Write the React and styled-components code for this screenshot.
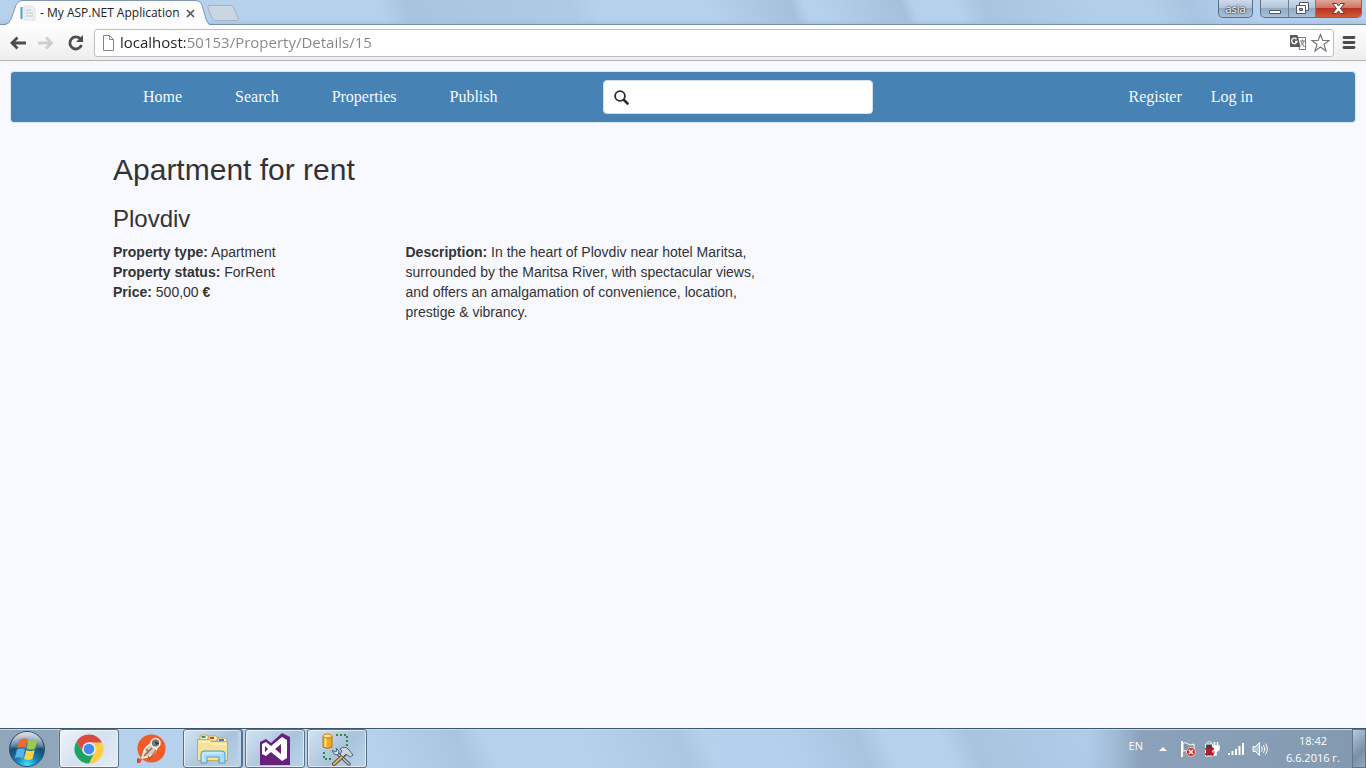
import React from "react";
import styled, { createGlobalStyle } from "styled-components";

const GlobalStyle = createGlobalStyle`
  *, *::before, *::after { box-sizing: border-box; }
  body {
    margin: 0;
    background: #f8f8ff;
    color: #333;
    font: 14px/20px "Liberation Sans", Arial, sans-serif;
  }
  button { padding: 0; border: 0; background: none; font: inherit; color: inherit; }
  svg { display: block; }
`;

const uiFont = `"Open Sans", "Noto Sans", sans-serif`;

const Screen = styled.div`
  display: flex;
  flex-direction: column;
  min-height: 100vh;
`;

/* ---------- browser window ---------- */

const TitleBar = styled.header`
  display: flex;
  align-items: flex-start;
  height: 25px;
  padding: 0 4px 0 5px;
  border-bottom: 1px solid #7e8da6;
  background:
    linear-gradient(180deg, transparent 80%, rgba(150, 190, 230, 0.5)),
    linear-gradient(68deg, #b5d1ec 28%, #a8c4de 30%, #aecae5 42%, #b5d1ec 44%,
      #b5d1ec 52%, #a5c0db 58%, #b5d1ec 59%, #b5d1ec 60%, #a5c0db 66%, #b5d1ec 67%,
      #b5d1ec 70%, #a8c4df 72%, #b2cfea 80%, #b2cfea 84%, #a8c4e0 87%, #b5d1ec 92%);
`;

const Tab = styled.div`
  position: relative;
  display: flex;
  align-items: center;
  width: 205px;
  height: 25px;
  padding: 1px 14px 0 15px;
  color: #222;
  font: 12px/16px ${uiFont};
  white-space: nowrap;
`;

const TabShape = styled.svg`
  position: absolute;
  inset: 0;
`;

const TabTitle = styled.span`
  position: relative;
  flex: 1;
  margin-left: 4px;
`;

const TabIcon = styled.svg`
  position: relative;
  flex: none;
`;

const TabClose = styled.button`
  position: relative;
  width: 9px;
  height: 9px;
  margin-right: 1px;
`;

const NewTab = styled.button`
  margin: 5px auto 0 -3px;
`;

const glass = `
  border: 1px solid #5b6f88;
  border-top: 0;
  background: linear-gradient(#cddbe9, #b3c6da 45%, #93abc5 50%, #a8c0da);
`;

const UserButton = styled.button`
  ${glass}
  width: 35px;
  height: 18px;
  margin-right: 7px;
  border-radius: 0 0 5px 5px;
  color: #fff;
  font: 11px/16px ${uiFont};
  text-shadow: 0 0 2px #223, 0 0 2px #223;
`;

const WindowControls = styled.div`
  ${glass}
  display: flex;
  height: 18px;
  border-radius: 0 0 5px 5px;
  overflow: hidden;
`;

const WindowButton = styled.button`
  display: grid;
  place-items: center;
  width: ${(p) => (p.$close ? 46 : 27)}px;
  height: 17px;
  border-left: ${(p) => (p.$divided ? "1px solid #6b7f98" : "0")};
  background: ${(p) => (p.$close ? "linear-gradient(#e0a698, #cf7465 45%, #b8321c 50%, #cd5c3c)" : "none")};
`;

const Toolbar = styled.div`
  display: flex;
  align-items: center;
  height: 36px;
  padding: 0 6px 0 8px;
  border-bottom: 1px solid #b3b3b6;
  background: linear-gradient(#fefefe, #eeeeef);
`;

const ToolButton = styled.button`
  flex: none;
  width: 20px;
  height: 20px;
  margin-right: ${(p) => p.$gap || 0}px;
`;

const AddressBar = styled.div`
  display: flex;
  flex: 1;
  align-items: center;
  height: 28px;
  margin-right: 6px;
  padding: 0 3px 0 7px;
  border: 1px solid #bdbdc1;
  border-radius: 3px;
  background: #fff;
`;

const AddressInput = styled.input`
  flex: 1;
  min-width: 0;
  height: 26px;
  margin-left: 5px;
  padding: 0 0 2px;
  border: 0;
  outline: 0;
  background: linear-gradient(90deg, #222 65px, #858585 65px);
  background-clip: text;
  -webkit-text-fill-color: transparent;
  font: 15px/24px ${uiFont};
`;

/* ---------- web page ---------- */

const Page = styled.main`
  flex: 1;
  padding: 10px 10px 0;
`;

const Navbar = styled.nav`
  border: 1px solid #dbe6f3;
  border-radius: 4px;
  background: steelblue;
`;

const Container = styled.div`
  width: 100%;
  max-width: 1170px;
  margin: 0 auto;
  padding: 0 15px;
`;

const NavRow = styled(Container)`
  display: flex;
  align-items: center;
  height: 50px;
`;

const NavLinks = styled.div`
  display: flex;
  gap: ${(p) => p.$gap}px;
  margin-left: ${(p) => (p.$end ? "auto" : "30px")};
  font: 16px/20px "Liberation Serif", "Times New Roman", serif;
`;

const NavLink = styled.a`
  color: #f8f8ff;
  text-decoration: none;
`;

const SearchBox = styled.label`
  display: flex;
  align-items: center;
  width: 270px;
  height: 34px;
  margin-left: 105px;
  padding: 0 10px;
  border: 1px solid #d5dfea;
  border-radius: 4px;
  background: #fff;
`;

const SearchInput = styled.input`
  flex: 1;
  min-width: 0;
  margin-left: 8px;
  border: 0;
  outline: 0;
  font: inherit;
`;

const Title = styled.h2`
  margin: 30px 0 10px;
  font-size: 30px;
  font-weight: 400;
  line-height: 33px;
`;

const City = styled.h3`
  margin: 20px 0 10px;
  font-size: 24px;
  font-weight: 400;
  line-height: 26px;
`;

const Columns = styled.div`
  display: grid;
  grid-template-columns: 3fr 4fr 5fr;
  margin: 0 -15px;
`;

const Column = styled.div`
  padding: 0 15px;
`;

const Line = styled.p`
  margin: 0;
`;

/* ---------- taskbar ---------- */

const Taskbar = styled.footer`
  display: flex;
  align-items: stretch;
  height: 40px;
  border-top: 1px solid #3c566b;
  box-shadow: inset 0 1px 0 #c9d9e6;
  background:
    linear-gradient(90deg, #92a6bb 58px, transparent 60px),
    linear-gradient(270deg, #8399b0, #8ca2ba 225px, rgba(150, 174, 200, 0.6) 250px, transparent 280px),
    linear-gradient(66deg, #b5d1ec 28%, #a9c5e0 34%, #b5d1ec 36%, #b5d1ec 43%, #abc8e3 50%,
      #b5d1ec 52%, #b2cfec 58%, #a8c4df 63%, #b5d1ec 65%, #b5d1ec 69%, #a8c4df 71%, #afcce9 80%);
`;

const StartButton = styled.button`
  width: 54px;
  padding-left: 8px;
  margin-right: 5px;
`;

const TaskButton = styled.button`
  display: grid;
  place-items: center;
  width: 60px;
  margin-right: ${(p) => p.$gap || 0}px;
  border: 1px solid ${(p) => (p.$state ? "#587087" : "transparent")};
  border-radius: 3px;
  box-shadow: ${(p) => (p.$state ? "inset 0 0 0 1px rgba(255,255,255,.6)" : "none")};
  background: ${(p) =>
    p.$state === "active"
      ? "linear-gradient(135deg, #eef4fa, #d4e1ee 50%, #e3edf6)"
      : p.$state === "open"
      ? "linear-gradient(135deg, #d3e3f2, #a9c4de 55%, #bcd4ea)"
      : "none"};
`;

const StackEdge = styled.span`
  width: 4px;
  margin: 0 3px 0 -5px;
  border: 1px solid #587087;
  border-left: 0;
  border-radius: 0 3px 3px 0;
  background: #bdd3e8;
`;

const Tray = styled.div`
  display: flex;
  align-items: center;
  margin-left: auto;
  color: #fff;
  font: 12px/17px ${uiFont};
`;

const Language = styled.span`
  margin: -6px 16px 0 0;
  font-size: 11px;
`;

const TrayIcon = styled.button`
  margin-right: ${(p) => p.$gap}px;
`;

const Clock = styled.time`
  width: 60px;
  margin-right: 9px;
  font-size: 11px;
  text-align: center;
  white-space: nowrap;
`;

const ShowDesktop = styled.button`
  align-self: stretch;
  width: 14px;
  border: 1px solid #60758b;
  background: linear-gradient(135deg, #b9c9d9, #7890a9 60%, #91a7bd);
`;

/* ---------- drawings ---------- */

const Arrow = ({ color, flip }) => (
  <svg width="20" height="20" viewBox="0 0 20 20" fill="none" stroke={color} strokeWidth="2.8">
    <path d={flip ? "M2 10h13M10 4.500l5.500 5.500-5.500 5.500" : "M18 10H4M9.500 4.500L4 10l5.500 5.500"} />
  </svg>
);

const StartOrb = () => (
  <svg width="38" height="38" viewBox="0 0 38 38">
    <defs>
      <radialGradient id="orb" cx="50%" cy="95%" r="85%">
        <stop offset="0" stopColor="#45e4ff" />
        <stop offset=".35" stopColor="#1685b4" />
        <stop offset=".7" stopColor="#164b76" />
        <stop offset="1" stopColor="#7793ab" />
      </radialGradient>
      <linearGradient id="shine" x1="0" y1="0" x2="0" y2="1">
        <stop offset="0" stopColor="#fff" stopOpacity=".7" />
        <stop offset="1" stopColor="#fff" stopOpacity=".1" />
      </linearGradient>
    </defs>
    <circle cx="19" cy="19" r="17.500" fill="url(#orb)" stroke="#31506b" />
    <path d="M3 17a16 15 0 0 1 32 0q-16 5-32 0z" fill="url(#shine)" />
    <path d="M11.500 10q4-3 8-1l-2.200 9q-4-2-8 0z" fill="#ee6b2f" />
    <path d="M20.800 9.500q4 2.500 8.500 0l-2.200 9q-4 2.500-8.500 0z" fill="#9ccb4c" />
    <path d="M9 19.500q4-2 8 0l-2.200 9q-4-2.500-8 0z" fill="#55b4ec" />
    <path d="M18.200 20q4 2 8.500 0l-2.200 9q-4 2-8.500 0z" fill="#fcd145" />
  </svg>
);

const Chrome = () => (
  <svg width="30" height="30" viewBox="0 0 30 30">
    <path d="M27.560 7.750A14.500 14.500 0 0 1 15 29.500L20.600 18.250 15 8.500h13z" fill="#ffcd42" />
    <path d="M2.440 7.750A14.500 14.500 0 0 0 15 29.500l5.600-11.250L15 21.500l-5.600-3.250z" fill="#1da362" />
    <path d="M2.440 7.750L9.400 18.250 15 8.500h13A14.500 14.500 0 0 0 2.440 7.750z" fill="#dd4b3e" />
    <circle cx="15" cy="15" r="6.800" fill="#f1f1f1" />
    <circle cx="15" cy="15" r="5.300" fill="#4688f1" />
  </svg>
);

const Postman = () => (
  <svg width="30" height="30" viewBox="0 0 30 30">
    <path d="M1 24l5 1-2 4H1z" fill="#e34d20" />
    <circle cx="15.500" cy="14.500" r="14" fill="#f15a29" />
    <path d="M16 9q-7 4-8.500 10L6 24l5-1q7-1 10-9z" fill="#d9c9b8" stroke="#fff3e8" strokeWidth="1.600" strokeLinejoin="round" />
    <path d="M8 22l8-8M12 22l1.500 3L20 16M10 15l3 3" fill="none" stroke="#8a6450" strokeWidth="1.200" />
    <circle cx="19.500" cy="9" r="4.500" fill="#727b80" stroke="#fff3e8" strokeWidth="1.600" />
    <path d="M19 7l4 2.500-3 1.500z" fill="#2c3338" />
  </svg>
);

const Explorer = () => (
  <svg width="34" height="32" viewBox="0 0 34 32">
    <path d="M4 7V3q0-1 1-1h6l2 2v3zM12 8V4q0-1 1-1h7l2 2v3zM21 9V6q0-1 1-1h7l2 2v3z" fill="#fbf6dc" stroke="#c2a255" />
    <path d="M5.500 4h4" stroke="#2da052" strokeWidth="2" />
    <path d="M14 5h4" stroke="#cf4234" strokeWidth="2" />
    <path d="M23 7h5" stroke="#3b84cb" strokeWidth="2" />
    <path d="M1.500 6.500h12l2 2h16v19h-30z" fill="#f6e39b" stroke="#c9a954" />
    <path d="M3 9h10l2 2h15" stroke="#fff8d2" fill="none" />
    <path d="M5 30v-9q0-3 3-3h18q3 0 3 3v9h-6v-6H11v6z" fill="#a9dcf5" stroke="#509dc5" />
    <path d="M7 28v-7q0-1 2-1h17" fill="none" stroke="#e9f8ff" />
  </svg>
);

const VisualStudio = () => (
  <svg width="30" height="32" viewBox="0 0 30 32">
    <path d="M0 9l6-3 5 4L22 0l8 4v28H0z" fill="#68217a" />
    <path fillRule="evenodd" fill="#fff" d="M22 4l5 3v18l-5 3-11-9-5 4-4-2V11l4-2 5 4zM21 11l-6 5 6 5zM5 13v6l3-3z" />
  </svg>
);

const DataTools = () => (
  <svg width="34" height="34" viewBox="0 0 34 34">
    <path d="M16 3h11v11M4 20v7h8" fill="none" stroke="#299027" strokeWidth="2" strokeDasharray="2 2" />
    <path d="M3 4v11q4.500 3 9 0V4z" fill="#f1a622" stroke="#ad7410" />
    <path d="M5.500 6v9" stroke="#ffe29a" strokeWidth="2" />
    <ellipse cx="7.500" cy="4" rx="4.500" ry="2" fill="#ffe17d" stroke="#bd8416" />
    <path d="M17 21l12 11" stroke="#4b5661" strokeWidth="3.500" strokeLinecap="round" />
    <path d="M17 21l12 11" stroke="#c3ccd5" strokeWidth="1.500" strokeLinecap="round" />
    <path d="M25 22L14 32" stroke="#6d4f2a" strokeWidth="4" strokeLinecap="round" />
    <path d="M25 22L14 32" stroke="#d9b377" strokeWidth="2" strokeLinecap="round" />
    <path d="M12 18l2 4 4 1 1-4-3-3 1 3-2 1z" fill="#e1e8ee" stroke="#526374" />
    <path d="M20 17q5-4 9 1l4 5-3 2-4-3-3 3-3-3 2-3z" fill="#cbd5de" stroke="#526374" />
  </svg>
);

const Flag = () => (
  <svg width="16" height="16" viewBox="0 0 16 16">
    <path d="M2 0v16" stroke="#fff" strokeWidth="2" />
    <path d="M3 2q3-1 5 1t6 0v7q-3 1-5 0t-6 0z" fill="#8195a9" stroke="#fff" />
    <circle cx="11" cy="11" r="4.500" fill="#d92e28" stroke="#f7c0b8" />
    <path d="M9 9l4 4M13 9l-4 4" stroke="#fff" strokeWidth="1.500" />
  </svg>
);

const Power = () => (
  <svg width="16" height="16" viewBox="0 0 16 16">
    <path d="M1.500 3h7v12h-7zM3 1h4v2" fill="#3c4650" stroke="#fff" />
    <path d="M9 5h6v3q0 2-3 2t-3-2zM10.500 1v4M13.500 1v4M12 10v4H9" fill="#fff" stroke="#fff" strokeWidth="1.500" />
    <path d="M1.500 7l8 7M9.500 7l-8 7" stroke="#e00d14" strokeWidth="2.500" />
  </svg>
);

const taskbarApps = [
  { label: "Google Chrome", icon: <Chrome />, state: "active", gap: 2 },
  { label: "Postman", icon: <Postman />, gap: 2 },
  { label: "File Explorer", icon: <Explorer />, state: "open", stacked: true },
  { label: "Visual Studio", icon: <VisualStudio />, state: "open", gap: 2 },
  { label: "Data Tools", icon: <DataTools />, state: "open" },
];

const trayIcons = [
  {
    label: "Show hidden icons",
    gap: 13,
    icon: (
      <svg width="8" height="4" viewBox="0 0 8 4">
        <path d="M0 4l4-4 4 4z" fill="#fff" />
      </svg>
    ),
  },
  { label: "Action center", gap: 8, icon: <Flag /> },
  { label: "Power", gap: 8, icon: <Power /> },
  {
    label: "Network",
    gap: 8,
    icon: (
      <svg width="16" height="14" viewBox="0 0 16 14">
        <path d="M1 13v-2M4.500 13V9M8 13V7M11.500 13V4M15 13V1" stroke="#fff" strokeWidth="2" />
      </svg>
    ),
  },
  {
    label: "Volume",
    gap: 15,
    icon: (
      <svg width="16" height="16" viewBox="0 0 16 16">
        <path d="M1 5.500h2.500l4-4v13l-4-4H1z" fill="#b9c6d3" stroke="#fff" />
        <path d="M9.500 5.500q1.500 2.500 0 5M11.500 4q2.500 4 0 8M13.500 2.500q3.500 5.500 0 11" fill="none" stroke="#fff" />
      </svg>
    ),
  },
];

export default function App() {
  return (
    <Screen>
      <GlobalStyle />
      <TitleBar>
        <Tab>
          <TabShape width="205" height="25" viewBox="0 0 205 25">
            <path d="M0 25Q4 24 6 19L11 5Q13 .500 17 .500H190Q195 .500 197 5L201 19Q203 25 205 25z" fill="#fcfcfd" />
            <path d="M0 24.500Q4 24 6 19L11 5Q13 .500 17 .500H190Q195 .500 197 5L201 19Q203 24 205 24.500" fill="none" stroke="#8096b0" />
          </TabShape>
          <TabIcon width="16" height="16" viewBox="0 0 16 16">
            <path d="M4 1h8l3 3v11H4z" fill="#eef1f3" stroke="#dde2e5" />
            <path d="M1.500 2v12" stroke="#4f9fc8" strokeWidth="2" />
            <path d="M6 5h5M6 8h7M6 11h7" stroke="#bac9d5" />
          </TabIcon>
          <TabTitle>- My ASP.NET Application</TabTitle>
          <TabClose aria-label="Close tab">
            <svg width="9" height="9" viewBox="0 0 9 9">
              <path d="M1 1l7 7M8 1L1 8" stroke="#555" strokeWidth="1.700" />
            </svg>
          </TabClose>
        </Tab>
        <NewTab aria-label="New tab">
          <svg width="32" height="16" viewBox="0 0 32 16">
            <path d="M2 .500H24Q26 .500 27 3l4 10q1 2.500-1 2.500H8Q6 15.500 5 13L1 3Q0 .500 2 .500z" fill="#ccd6e0" stroke="#a3b2c4" />
          </svg>
        </NewTab>
        <UserButton>asia</UserButton>
        <WindowControls>
          <WindowButton aria-label="Minimize">
            <svg width="12" height="14" viewBox="0 0 12 14">
              <path d="M.500 8.500h11v3H.500z" fill="#fff" stroke="#4c5665" />
            </svg>
          </WindowButton>
          <WindowButton $divided aria-label="Restore">
            <svg width="13" height="13" viewBox="0 0 13 13">
              <path d="M3.500 .500h9v8h-9z" fill="#fff" stroke="#4c5665" />
              <path d="M.500 3.500h9v8H.500z" fill="#fff" stroke="#4c5665" />
              <path d="M3.500 6.500h3v2h-3z" fill="#9fb5cb" stroke="#4c5665" />
            </svg>
          </WindowButton>
          <WindowButton $divided $close aria-label="Close">
            <svg width="13" height="11" viewBox="0 0 13 11">
              <path d="M.500 .500h4l2 2.500 2-2.500h4l-4 5 4 5h-4l-2-2.500-2 2.500h-4l4-5z" fill="#fff" stroke="#5e3b3c" />
            </svg>
          </WindowButton>
        </WindowControls>
      </TitleBar>

      <Toolbar>
        <ToolButton $gap={8} aria-label="Back"><Arrow color="#4d4d4d" /></ToolButton>
        <ToolButton $gap={9} aria-label="Forward"><Arrow color="#cfcfcf" flip /></ToolButton>
        <ToolButton $gap={9} aria-label="Reload">
          <svg width="20" height="20" viewBox="0 0 20 20">
            <path d="M16.500 12A6 6 0 1 1 15.200 5.800" fill="none" stroke="#4d4d4d" strokeWidth="2.800" />
            <path d="M18 2v7h-7z" fill="#4d4d4d" />
          </svg>
        </ToolButton>
        <AddressBar>
          <svg width="13" height="16" viewBox="0 0 13 16">
            <path d="M1.500 .500h6l4 4v11h-10zM7.500 .500v4h4" fill="#fff" stroke="#858585" />
          </svg>
          <AddressInput aria-label="Address" defaultValue="localhost:50153/Property/Details/15" />
          <ToolButton $gap={2} aria-label="Translate">
            <svg width="20" height="20" viewBox="0 0 20 20">
              <path d="M9.500 4.500h8v12h-6z" fill="#fff" stroke="#777" />
              <path d="M2 2h7.500l3 12H2z" fill="#5b5b5b" />
              <path d="M8.500 6.200A2.700 2.700 0 1 0 9 8.500H7" fill="none" stroke="#fff" strokeWidth="1.400" />
              <path d="M12 8h5M14.500 6.500V8M16 8q-1 3-3 4.500M13 9l3.500 5" fill="none" stroke="#777" />
            </svg>
          </ToolButton>
          <ToolButton aria-label="Bookmark this page">
            <svg width="20" height="20" viewBox="0 0 20 20">
              <path d="M10.500 1.500l2.300 6h6.200l-5 4 2 6.500-5.500-4-5.500 4 2-6.500-5-4h6.200z" fill="#fff" stroke="#777" strokeWidth="1.200" />
            </svg>
          </ToolButton>
        </AddressBar>
        <ToolButton aria-label="Menu">
          <svg width="20" height="20" viewBox="0 0 20 20">
            <path d="M4 4.500h10M4 9.500h10M4 14.500h10" stroke="#4d4d4d" strokeWidth="2.800" strokeLinecap="round" />
          </svg>
        </ToolButton>
      </Toolbar>

      <Page>
        <Navbar>
          <NavRow>
            <NavLinks $gap={53}>
              <NavLink href="#home">Home</NavLink>
              <NavLink href="#search">Search</NavLink>
              <NavLink href="#properties">Properties</NavLink>
              <NavLink href="#publish">Publish</NavLink>
            </NavLinks>
            <SearchBox>
              <svg width="15" height="15" viewBox="0 0 15 15" fill="none" stroke="#2b2b2b">
                <circle cx="6" cy="6" r="4.900" strokeWidth="1.800" />
                <path d="M10 10l3.500 3.500" strokeWidth="2.600" strokeLinecap="round" />
              </svg>
              <SearchInput type="search" aria-label="Search properties" />
            </SearchBox>
            <NavLinks $end $gap={29}>
              <NavLink href="#register">Register</NavLink>
              <NavLink href="#login">Log in</NavLink>
            </NavLinks>
          </NavRow>
        </Navbar>
        <Container>
          <Title>Apartment for rent</Title>
          <City>Plovdiv</City>
          <Columns>
            <Column>
              <Line><b>Property type:</b> Apartment</Line>
              <Line><b>Property status:</b> ForRent</Line>
              <Line><b>Price:</b> 500,00 <b>€</b></Line>
            </Column>
            <Column>
              <Line>
                <b>Description:</b> In the heart of Plovdiv near hotel Maritsa, surrounded by the Maritsa
                River, with spectacular views, and offers an amalgamation of convenience, location,
                prestige &amp; vibrancy.
              </Line>
            </Column>
          </Columns>
        </Container>
      </Page>

      <Taskbar>
        <StartButton aria-label="Start"><StartOrb /></StartButton>
        {taskbarApps.map((app) => (
          <React.Fragment key={app.label}>
            <TaskButton $state={app.state} $gap={app.gap} aria-label={app.label}>{app.icon}</TaskButton>
            {app.stacked && <StackEdge />}
          </React.Fragment>
        ))}
        <Tray>
          <Language>EN</Language>
          {trayIcons.map((item) => (
            <TrayIcon key={item.label} $gap={item.gap} aria-label={item.label}>{item.icon}</TrayIcon>
          ))}
          <Clock>18:42<br />6.6.2016 г.</Clock>
          <ShowDesktop aria-label="Show desktop" />
        </Tray>
      </Taskbar>
    </Screen>
  );
}
